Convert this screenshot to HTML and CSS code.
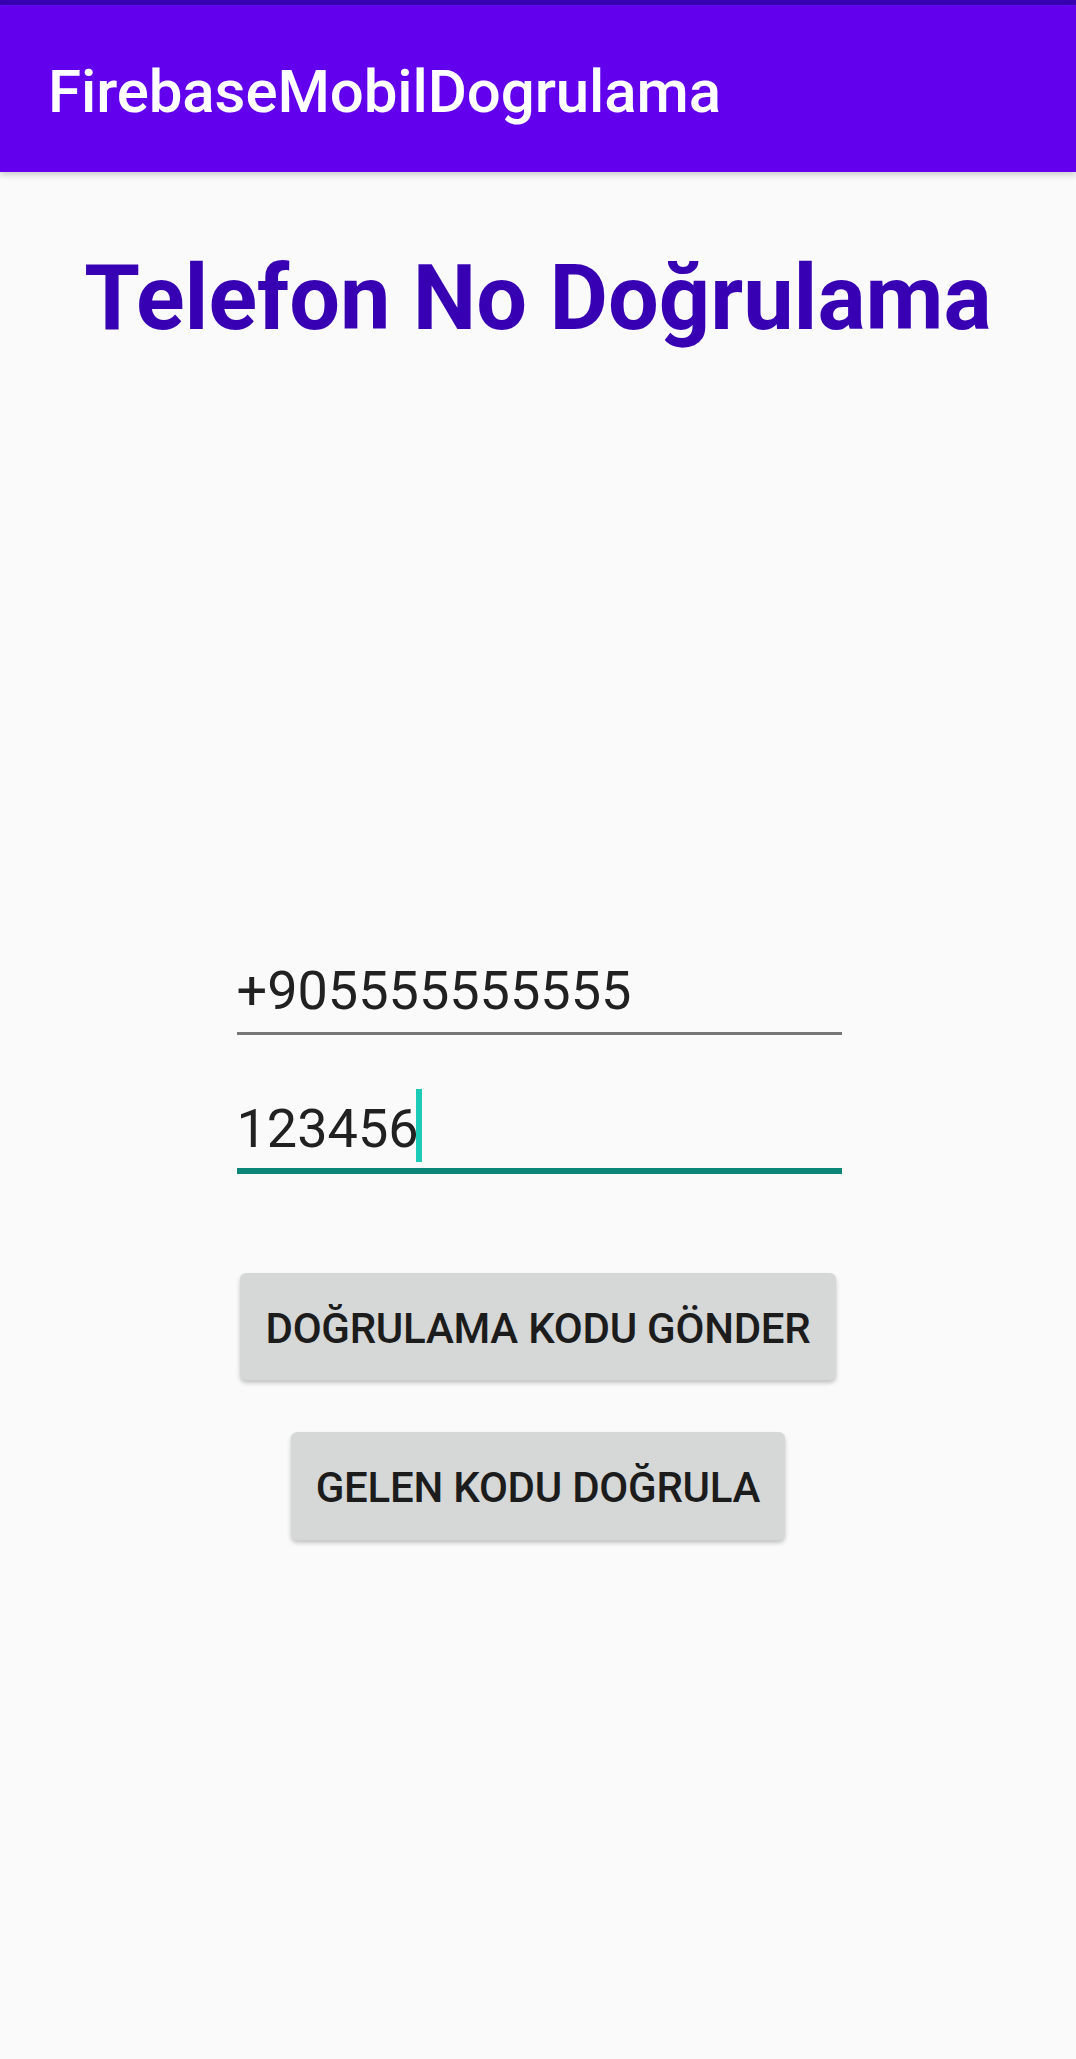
FILE: index.html
```html
<!DOCTYPE html>
<html lang="tr">
<head>
<meta charset="utf-8">
<title>FirebaseMobilDogrulama</title>
<link rel="stylesheet" href="styles.css">
</head>
<body>
<div class="status"></div>
<header class="appbar">
  <h1 class="app-title">FirebaseMobilDogrulama</h1>
</header>
<main class="content">
  <h2 class="heading">Telefon No Doğrulama</h2>
  <div class="form">
    <div class="field field-idle">+905555555555</div>
    <div class="field field-focus">123456<span class="caret"></span></div>
  </div>
  <button class="btn btn-send">DOĞRULAMA KODU GÖNDER</button>
  <button class="btn btn-verify">GELEN KODU DOĞRULA</button>
</main>
</body>
</html>
```
FILE: styles.css
```css
html, body {
  margin: 0;
  padding: 0;
}
body {
  background: #fafafa;
  font-family: Roboto, "Noto Sans", "Liberation Sans", sans-serif;
  min-height: 2059px;
}
.status {
  height: 5px;
  background: #3700b3;
}
.appbar {
  box-sizing: border-box;
  height: 167px;
  padding: 6px 0 0 48px;
  background: #6200ee;
  display: flex;
  align-items: center;
  box-shadow: 0 3px 6px rgba(0, 0, 0, 0.18);
  position: relative;
  z-index: 1;
}
.app-title {
  margin: 0;
  font-size: 60px;
  font-weight: 500;
  color: #ffffff;
  line-height: 70px;
  letter-spacing: -0.1px;
}
.content {
  display: flex;
  flex-direction: column;
  align-items: center;
}
.heading {
  margin: 74px 0 0;
  font-size: 90px;
  font-weight: 700;
  line-height: 106px;
  color: #3700b3;
  text-align: center;
}
.form {
  margin-top: 607px;
  width: 605px;
  margin-left: 2px;
  display: flex;
  flex-direction: column;
}
.field {
  font-size: 54px;
  line-height: 64px;
  color: #212121;
}
.field-idle {
  padding-bottom: 9px;
  border-bottom: 3px solid #767676;
}
.field-focus {
  margin-top: 62px;
  padding-bottom: 7px;
  border-bottom: 6px solid #0b8575;
}
.caret {
  display: inline-block;
  position: relative;
  width: 0;
  height: 0;
}
.caret::after {
  content: "";
  position: absolute;
  left: -3px;
  top: -58px;
  width: 6px;
  height: 73px;
  background: #1ccab8;
}
.btn {
  box-sizing: border-box;
  height: 107px;
  padding: 3px 25px 0;
  border: none;
  border-radius: 6px;
  background: #d6d7d7;
  color: #1c1c1c;
  font-family: Roboto, "Noto Sans", "Liberation Sans", sans-serif;
  font-size: 42px;
  font-weight: 500;
  letter-spacing: -0.25px;
  box-shadow: 0 3px 4px rgba(0, 0, 0, 0.22);
}
.btn-send {
  margin-top: 99px;
}
.btn-verify {
  margin-top: 52px;
  height: 108px;
}
```
